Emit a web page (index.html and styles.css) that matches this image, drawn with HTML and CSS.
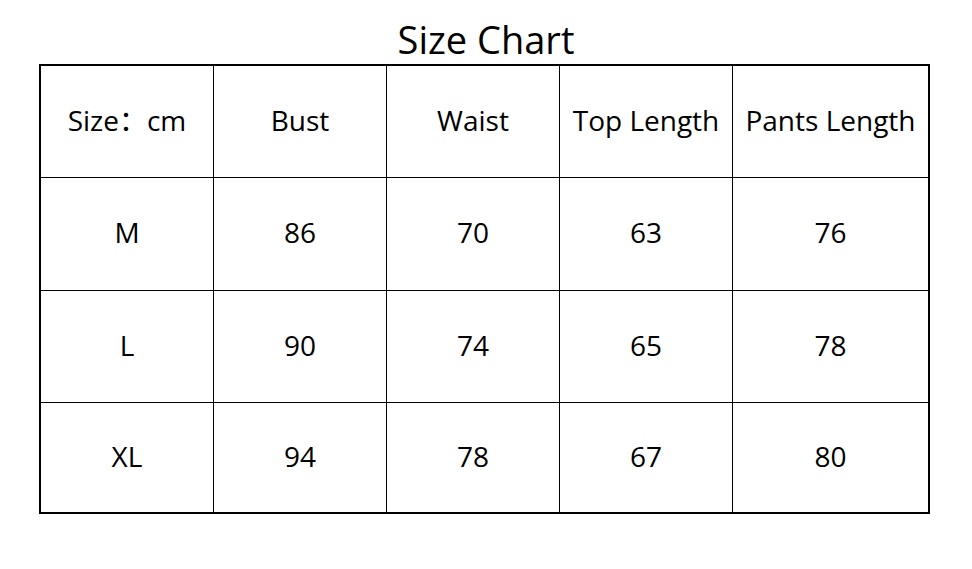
FILE: index.html
```html
<!DOCTYPE html>
<html>
<head>
<meta charset="utf-8">
<link rel="stylesheet" href="styles.css">
</head>
<body>
<h1 class="title">Size Chart</h1>
<div class="chart">
  <div class="cell">Size：cm</div>
  <div class="cell">Bust</div>
  <div class="cell">Waist</div>
  <div class="cell">Top Length</div>
  <div class="cell">Pants Length</div>
  <div class="cell">M</div>
  <div class="cell">86</div>
  <div class="cell">70</div>
  <div class="cell">63</div>
  <div class="cell">76</div>
  <div class="cell">L</div>
  <div class="cell">90</div>
  <div class="cell">74</div>
  <div class="cell">65</div>
  <div class="cell">78</div>
  <div class="cell">XL</div>
  <div class="cell">94</div>
  <div class="cell">78</div>
  <div class="cell">67</div>
  <div class="cell">80</div>
</div>
</body>
</html>
```
FILE: styles.css
```css
html, body {
  margin: 0;
  padding: 0;
  background: #fff;
}
body {
  width: 972px;
  height: 569px;
  font-family: "Open Sans", "Noto Sans CJK SC", sans-serif;
  color: #000;
}
.title {
  margin: 0;
  height: 64px;
  box-sizing: border-box;
  padding-top: 14px;
  font-size: 38px;
  line-height: 50px;
  font-weight: 400;
  text-align: center;
}
.chart {
  margin-left: 39px;
  width: 891px;
  box-sizing: border-box;
  border: 2px solid #000;
  background: #000;
  display: grid;
  grid-template-columns: 172px 172px 172px 172px 195px;
  grid-template-rows: 111px 112px 111px 109px;
  gap: 1px;
}
.cell {
  background: #fff;
  display: flex;
  align-items: center;
  justify-content: center;
  font-size: 28px;
  line-height: 38px;
  padding-bottom: 4px;
  white-space: nowrap;
}
```
